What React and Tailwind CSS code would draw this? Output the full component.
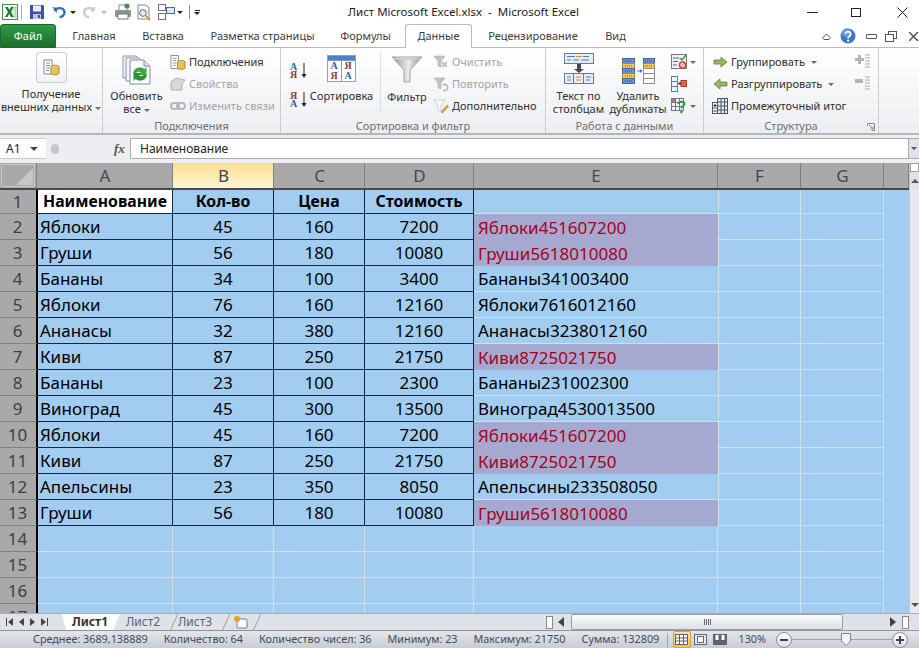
import React from 'react';

const ui = { fontFamily: '"Noto Sans", sans-serif' };

const rows = [
  ['Яблоки', 45, 160, 7200],
  ['Груши', 56, 180, 10080],
  ['Бананы', 34, 100, 3400],
  ['Яблоки', 76, 160, 12160],
  ['Ананасы', 32, 380, 12160],
  ['Киви', 87, 250, 21750],
  ['Бананы', 23, 100, 2300],
  ['Виноград', 45, 300, 13500],
  ['Яблоки', 45, 160, 7200],
  ['Киви', 87, 250, 21750],
  ['Апельсины', 23, 350, 8050],
  ['Груши', 56, 180, 10080],
];

const joined = rows.map((r) => r.join(''));

function Caret({ className = '' }) {
  return <span className={`inline-block w-0 h-0 border-x-[3px] border-x-transparent border-t-[3px] border-t-[#6a6a6a] ${className}`} />;
}

function ExcelLogo() {
  return (
    <svg width="16" height="16" viewBox="0 0 16 16">
      <rect x="0.500" y="0.500" width="15" height="15" fill="#fff" stroke="#3e8e4a" />
      <rect x="9" y="3" width="5" height="10" fill="#cfe8cf" stroke="#6aa86f" strokeWidth="0.500" />
      <path d="M3 3h3l1.400 3L9 3h2.400L8.800 8l2.800 5H8.800L7.200 9.800 5.600 13H3l3-5z" fill="#1e7a34" />
    </svg>
  );
}

function QuickBar() {
  return (
    <div className="flex items-center h-full">
      <div className="ml-[2px]"><ExcelLogo /></div>
      <div className="w-px h-[14px] bg-[#a9a9a9] ml-[3px]" />
      <svg className="ml-[7px]" width="16" height="16" viewBox="0 0 16 16">
        <path d="M1 1h13l1 1v13H1z" fill="#3e4fa8" />
        <rect x="4" y="1.500" width="8" height="6" fill="#e9edf7" />
        <rect x="4" y="10" width="8" height="5" fill="#b9c0d8" />
        <rect x="9" y="11" width="2" height="3" fill="#3e4fa8" />
      </svg>
      <svg className="ml-[7px]" width="15" height="14" viewBox="0 0 14 14" fill="none">
        <path d="M2 6c2-4 9-4 10 1 0 3-2 5-5 5" stroke="#2e6fc0" strokeWidth="2.400" />
        <path d="M0 2l5 1-1 5z" fill="#2e6fc0" />
      </svg>
      <Caret className="ml-[3px] !border-t-[#222]" />
      <svg className="ml-[6px]" width="14" height="14" viewBox="0 0 14 14" fill="none">
        <path d="M12 6C10 2 3 2 2 7c0 3 2 5 5 5" stroke="#c3cbd0" strokeWidth="2.400" />
        <path d="M14 2l-5 1 1 5z" fill="#c3cbd0" />
      </svg>
      <Caret className="ml-[5px] !border-t-[#b5b5b5]" />
      <svg className="ml-[7px]" width="18" height="18" viewBox="0 0 18 18">
        <rect x="5" y="2" width="8" height="6" fill="#fff" stroke="#8a8a8a" />
        <rect x="1" y="7" width="16" height="7" rx="1" fill="#8d9296" />
        <rect x="4" y="11" width="10" height="5" fill="#fff" stroke="#777" />
        <circle cx="13" cy="3" r="2.600" fill="#3d9a43" />
      </svg>
      <svg className="ml-[4px]" width="17" height="17" viewBox="0 0 17 17" fill="none">
        <path d="M2 1h8l3 3v11H2z" fill="#fff" stroke="#7c8690" />
        <circle cx="7" cy="9" r="3.400" fill="#dcebf7" stroke="#5a6b7d" />
        <path d="M10 12l4 4" stroke="#d99a2b" strokeWidth="2" />
      </svg>
      <svg className="ml-[5px]" width="17" height="16" viewBox="0 0 17 16" fill="none">
        <rect x="0.500" y="0.500" width="7" height="6" fill="#fff" stroke="#6a7480" />
        <rect x="8.500" y="3.500" width="8" height="6" fill="#dbe7f4" stroke="#3c6fa8" />
        <rect x="0.500" y="9.500" width="7" height="6" fill="#fff" stroke="#6a7480" />
      </svg>
      <Caret className="ml-[2px] !border-t-[#222]" />
      <div className="w-px h-[14px] bg-[#8f8f8f] ml-[6px]" />
      <div className="ml-[4px] flex flex-col items-center gap-[1px]">
        <span className="w-[5px] h-px bg-[#222]" />
        <Caret className="!border-t-[#222]" />
      </div>
    </div>
  );
}

function TitleBar() {
  return (
    <div className="h-[24px] bg-white flex items-center relative shrink-0">
      <QuickBar />
      <div className="absolute left-[348px] top-[3px] text-[11.500px] text-[#1a1a1a] whitespace-pre">Лист Microsoft Excel.xlsx  -  Microsoft Excel</div>
      <div className="ml-auto flex items-center h-full">
        <span className="w-[11px] h-px bg-[#222] mr-[33px]" />
        <span className="w-[10px] h-[9px] border border-[#222] mr-[36px]" />
        <svg className="mr-[11px]" width="11" height="11" viewBox="0 0 11 11" stroke="#222"><path d="M0.500 0.500l10 10M10.500 0.500l-10 10" /></svg>
      </div>
    </div>
  );
}

const tabs = [
  ['Главная', 'w-[76px]'],
  ['Вставка', 'w-[62px]'],
  ['Разметка страницы', 'w-[137px]'],
  ['Формулы', 'w-[74px] pr-[5px]'],
];

function TabBar() {
  return (
    <div className="h-[24px] bg-white flex items-end relative shrink-0 text-[11px] text-[#3c3c3c]">
      <div className="absolute left-0 right-0 bottom-0 h-px bg-[#b7bbbf]" />
      <div className="w-[56px] h-[24px] rounded-t-[3px] bg-gradient-to-b from-[#2f9a46] to-[#1d6e2e] border border-[#1c6a2c] text-white flex items-center justify-center relative">Файл</div>
      {tabs.map(([t, w]) => (
        <div key={t} className={`${w} h-[24px] flex items-center justify-center`}>{t}</div>
      ))}
      <div className="w-[67px] h-[24px] bg-white border border-b-0 border-[#b7bbbf] rounded-t-[3px] flex items-center justify-center relative z-10">Данные</div>
      <div className="w-[122px] h-[24px] flex items-center justify-center">Рецензирование</div>
      <div className="w-[43px] h-[24px] flex items-center justify-center">Вид</div>
      <div className="ml-auto flex items-center h-[24px]">
        <svg className="mr-[9px]" width="9" height="7" viewBox="0 0 9 7" fill="none" stroke="#555"><path d="M0.500 5l4-4 4 4-1.500 1.500h-5z" /></svg>
        <svg className="mr-[10px]" width="16" height="16" viewBox="0 0 17 17"><circle cx="8.500" cy="8.500" r="8" fill="#3f78c8" /><circle cx="7" cy="5" r="5" fill="#7fa9e2" opacity=".6" /><path d="M5.800 6.500c0-3.400 5.600-3.400 5.600 0 0 2.200-2.800 2.200-2.800 4.500" fill="none" stroke="#fff" strokeWidth="1.900" /><circle cx="8.600" cy="13.500" r="1.200" fill="#fff" /></svg>
        <span className="w-[11px] h-[5px] border border-[#555] rounded-[1px] mr-[8px]" />
        <svg className="mr-[12px]" width="12" height="11" viewBox="0 0 12 11" fill="#fff" stroke="#555"><rect x="3.500" y="0.500" width="8" height="7" /><rect x="0.500" y="3.500" width="8" height="7" /></svg>
        <svg width="10" height="9" viewBox="0 0 10 9" stroke="#555" strokeWidth="1.500"><path d="M0 0l9 9M9 0l-9 9" /></svg>
      </div>
    </div>
  );
}

function Group({ label, width, children, launcher }) {
  return (
    <div className={`${width} h-full flex flex-col border-r border-[#c9ccd0] relative shrink-0`}>
      <div className="flex-1 flex min-h-0">{children}</div>
      <div className="h-[14px] text-center text-[11px] leading-[14px] text-[#6f6f6f]">{label}</div>
      {launcher && (
        <svg className="absolute right-[3px] bottom-[2px]" width="8" height="8" viewBox="0 0 8 8" fill="none" stroke="#8a8a8a"><path d="M0.500 3V0.500H7.500V7.500H5M2 2l4 4M6 3.500V6H3.500" /></svg>
      )}
    </div>
  );
}

function SmallRow({ icon, label, disabled, caret, className = '' }) {
  return (
    <div className={`h-[22px] flex items-center whitespace-nowrap ${disabled ? 'text-[#a5a5a5]' : 'text-[#2f2f2f]'} ${className}`}>
      <span className="w-[16px] h-[16px] flex items-center justify-center mr-[3px]">{icon}</span>
      {label}
      {caret && <Caret className="ml-[6px]" />}
    </div>
  );
}

function ExternalIcon() {
  return (
    <svg width="17" height="17" viewBox="0 0 17 17">
      <path d="M1 1h8v14H1z" fill="#fff" stroke="#7d8794" />
      <path d="M3 4h4M3 6.500h4M3 9h4M3 11.500h3" stroke="#7b8ea6" />
      <ellipse cx="12" cy="8" rx="4" ry="1.800" fill="#f1cf72" stroke="#a88a3a" />
      <path d="M8 8v6c0 2.400 8 2.400 8 0V8" fill="#e9bf56" stroke="#a88a3a" />
    </svg>
  );
}

function RefreshIcon() {
  return (
    <svg width="30" height="30" viewBox="0 0 30 30">
      <path d="M1 1h13l3 3v19H1z" fill="#eef2f7" stroke="#8c97a6" />
      <path d="M4 3h13l3 3v20H4z" fill="#f4f6fa" stroke="#8c97a6" />
      <path d="M8 5h14l6 6v18H8z" fill="#fff" stroke="#7f8a99" />
      <path d="M22 5v6h6" fill="#dfe6ee" stroke="#7f8a99" />
      <path d="M11 18a7 7 0 0 1 11.500-4l2-2v8h-8l2.500-2.500a3.400 3.400 0 0 0-5 1z" fill="#3ea843" />
      <path d="M25 20a7 7 0 0 1-11.500 4l-2 2v-8h8L17 20.500a3.400 3.400 0 0 0 5-1z" fill="#2f9137" />
    </svg>
  );
}

function SortAZ({ reverse }) {
  const top = reverse ? '#8f3a3a' : '#2f5da0';
  const bot = reverse ? '#2f5da0' : '#8f3a3a';
  return (
    <div className="flex items-center gap-[4px] w-[18px]">
      <div className="flex flex-col text-[10px] leading-[8px] font-bold" style={{ fontFamily: '"Liberation Serif", serif' }}>
        <span style={{ color: top }}>{reverse ? 'Я' : 'А'}</span>
        <span style={{ color: bot }}>{reverse ? 'А' : 'Я'}</span>
      </div>
      <svg width="6" height="16" viewBox="0 0 6 16"><path d="M3 0v12" stroke="#222" /><path d="M0.500 11h5L3 15z" fill="#222" /></svg>
    </div>
  );
}

function SortBigIcon() {
  const cell = 'flex-1 flex flex-col items-center justify-center text-[10px] leading-[10px] font-bold bg-white';
  return (
    <div className="w-[29px] h-[27px] border border-[#94a3b5] bg-[#7c98ba] flex flex-col" style={{ fontFamily: '"Liberation Serif", serif' }}>
      <div className="h-[4px] bg-[#4f81c7]" />
      <div className="flex-1 flex gap-px pt-px">
        <div className={cell}><span className="text-[#2f5da0]">А</span><span className="text-[#8f3a3a]">Я</span></div>
        <div className={cell}><span className="text-[#8f3a3a]">Я</span><span className="text-[#2f5da0]">А</span></div>
      </div>
    </div>
  );
}

function FunnelIcon() {
  return (
    <svg width="32" height="27" viewBox="0 0 32 27">
      <defs>
        <linearGradient id="fn" x1="0" x2="1" y1="0" y2="0">
          <stop offset="0" stopColor="#8e8e8e" /><stop offset=".55" stopColor="#ececec" /><stop offset="1" stopColor="#8a8a8a" />
        </linearGradient>
      </defs>
      <path d="M1 1h30L19 14v12h-6V14z" fill="url(#fn)" stroke="#a3a3a3" />
      <ellipse cx="16" cy="2.500" rx="14" ry="1.500" fill="#d0d0d0" />
    </svg>
  );
}

function SmallFunnel({ color = '#c3c3c3', extra }) {
  return (
    <svg width="16" height="16" viewBox="0 0 16 16">
      <path d="M1 2h11L8 7v6l-3-1V7z" fill={color} stroke="#a0a0a0" strokeWidth="0.500" />
      {extra}
    </svg>
  );
}

function TextColsIcon() {
  return (
    <svg width="32" height="31" viewBox="0 0 32 31" fill="none">
      <rect x="1.500" y="0.500" width="29" height="10" fill="#e6edf6" stroke="#6d7a8a" />
      <path d="M4 3.500h8M20 3.500h6M4 7h4M10 7h6M18 7h8" stroke="#4f7ec0" />
      <path d="M13 3.500h6" stroke="#e88a1a" />
      <path d="M14 11h4v5h3l-5 4-5-4h3z" fill="#4a4a4a" />
      <rect x="1.500" y="20.500" width="29" height="10" fill="#e6edf6" stroke="#6d7a8a" />
      <path d="M10.500 20.500v10M20.500 20.500v10" stroke="#6d7a8a" />
      <path d="M4 24h4M23 24h5M4 27h4M23 27h4" stroke="#4f7ec0" />
      <path d="M13 24h5M13 27h5" stroke="#e88a1a" />
    </svg>
  );
}

function DedupIcon() {
  const blue = '#6d93cf';
  const gold = '#f4c652';
  const Hatch = ({ x, y, c }) => <path d={`M${x} ${y}h8`} stroke={c} strokeDasharray="1 1" />;
  return (
    <svg width="33" height="26" viewBox="0 0 33 26">
      <rect x="0.500" y="0.500" width="12" height="5" fill={blue} stroke="#44659a" />
      <rect x="0.500" y="5.500" width="12" height="5" fill={gold} stroke="#a88a3a" />
      <rect x="0.500" y="10.500" width="12" height="5" fill={blue} stroke="#44659a" />
      <rect x="0.500" y="15.500" width="12" height="5" fill={gold} stroke="#a88a3a" />
      <rect x="0.500" y="20.500" width="12" height="5" fill={blue} stroke="#44659a" />
      <Hatch x={3} y={3} c="#27406d" /><Hatch x={3} y={8} c="#7c5a12" /><Hatch x={3} y={13} c="#27406d" /><Hatch x={3} y={18} c="#7c5a12" /><Hatch x={3} y={23} c="#27406d" />
      <path d="M15 13h3" stroke="#3a6fc0" /><path d="M18 11l2.500 2L18 15z" fill="#3a6fc0" />
      <rect x="21.500" y="0.500" width="11" height="5" fill={blue} stroke="#44659a" />
      <rect x="21.500" y="5.500" width="11" height="5" fill={gold} stroke="#a88a3a" />
      <Hatch x={23} y={3} c="#27406d" /><Hatch x={23} y={8} c="#7c5a12" />
      <rect x="21.500" y="10.500" width="11" height="5" fill="#fff" stroke="#8a8f96" />
      <rect x="21.500" y="15.500" width="11" height="5" fill="#fff" stroke="#8a8f96" />
      <rect x="21.500" y="20.500" width="11" height="5" fill="#fff" stroke="#8a8f96" />
    </svg>
  );
}

function ValidationIcon() {
  return (
    <svg width="16" height="16" viewBox="0 0 16 16" fill="none">
      <rect x="0.500" y="0.500" width="15" height="14" fill="#eef3f9" stroke="#6d7a8a" />
      <path d="M2 4h6M2 7.500h5M2 11h4" stroke="#5a6b7d" />
      <path d="M9 4l2 2 4-5" stroke="#3d9a43" strokeWidth="1.500" />
      <circle cx="11.500" cy="11" r="3" fill="#fff" stroke="#d8402a" strokeWidth="1.500" />
      <path d="M9.500 13l4-4" stroke="#d8402a" />
    </svg>
  );
}

function ConsolidateIcon() {
  return (
    <svg width="16" height="16" viewBox="0 0 16 16" fill="none">
      <rect x="0.500" y="0.500" width="6" height="15" fill="#eef3f9" stroke="#5f7c9e" />
      <path d="M0.500 5.500h6M0.500 10.500h6" stroke="#5f7c9e" />
      <rect x="10" y="4.500" width="5.500" height="6" fill="#e8604a" stroke="#b03a28" />
      <path d="M7 7.500h2.500" stroke="#333" /><path d="M8.500 5.500l2 2-2 2z" fill="#333" />
    </svg>
  );
}

function WhatIfIcon() {
  return (
    <svg width="16" height="16" viewBox="0 0 16 16">
      <rect x="0.500" y="0.500" width="12" height="12" fill="#eef3f9" stroke="#6d7a8a" />
      <path d="M0.500 4.500h12M0.500 8.500h12M4.500 0.500v12M8.500 0.500v12" stroke="#6d7a8a" />
      <rect x="1" y="1" width="3" height="3" fill="#e8604a" />
      <path d="M7.500 6c0-3 6-3 6 0 0 2.200-3 2-3 4.500" fill="none" stroke="#2f9a3e" strokeWidth="2" />
      <circle cx="10.500" cy="14" r="1.400" fill="#2f9a3e" />
    </svg>
  );
}

function ArrowIcon({ left }) {
  return (
    <svg width="15" height="12" viewBox="0 0 15 12">
      <path d={left ? 'M1 6l6-5v3h7v4H7v3z' : 'M14 6L8 1v3H1v4h7v3z'} fill="#93b95c" stroke="#5f7f34" strokeWidth="0.800" />
    </svg>
  );
}

function SubtotalIcon() {
  return (
    <svg width="16" height="16" viewBox="0 0 16 16" fill="none" stroke="#4c5866">
      <rect x="0.500" y="4.500" width="5" height="11" fill="#fff" />
      <rect x="5.500" y="0.500" width="10" height="15" fill="#e3ebf5" />
      <path d="M0.500 10h5M5.500 4h10M5.500 8h10M5.500 12h10M9 0.500v15M12.500 0.500v15" />
      <path d="M1.500 7.500h3M3 6v3M1.500 13h3" stroke="#222" />
    </svg>
  );
}

function OutlineIcon({ minus }) {
  return (
    <svg width="16" height="16" viewBox="0 0 16 16" fill="none">
      {minus ? <rect x="0" y="3" width="8" height="4" fill="#b5b5b5" /> : <path d="M3 1h3v3h3v3H6v3H3V7H0V4h3z" fill="#b5b5b5" />}
      <path d="M10 1h5M10 4h5M10 7h5M10 10h5M10 13h5" stroke="#a8a8a8" />
    </svg>
  );
}

function Ribbon() {
  return (
    <div className="h-[87px] shrink-0 flex bg-gradient-to-b from-white to-[#eceef1] border-b-2 border-[#b3b6ba] text-[11px] text-[#2f2f2f]">
      <Group label="" width="w-[103px]">
        <div className="w-full flex flex-col items-center pt-[4px]">
          <div className="w-[31px] h-[31px] rounded-[3px] border border-[#c9ccd0] bg-gradient-to-b from-white to-[#f1f2f4] flex items-center justify-center"><ExternalIcon /></div>
          <div className="text-center leading-[13px] mt-[4px] whitespace-nowrap">Получение<br />внешних данных<Caret className="ml-[3px] align-middle" /></div>
        </div>
      </Group>
      <Group label="Подключения" width="w-[178px]">
        <div className="w-[67px] flex flex-col items-center pt-[7px]">
          <RefreshIcon />
          <div className="text-center leading-[13px] mt-[4px]">Обновить<br />все<Caret className="ml-[3px] align-middle" /></div>
        </div>
        <div className="flex flex-col pt-[3px]">
          <SmallRow label="Подключения" icon={<ExternalIcon />} />
          <SmallRow label="Свойства" disabled icon={<svg width="16" height="16" viewBox="0 0 16 16"><path d="M1 6l5-4 9 2-3 4v6H1z" fill="#d6d8da" stroke="#b0b2b5" /></svg>} />
          <SmallRow label="Изменить связи" disabled icon={<svg width="16" height="10" viewBox="0 0 16 10" fill="none" stroke="#b5b7ba" strokeWidth="2"><rect x="1" y="2" width="8" height="6" rx="3" /><rect x="7" y="2" width="8" height="6" rx="3" /></svg>} />
        </div>
      </Group>
      <Group label="Сортировка и фильтр" width="w-[265px]">
        <div className="w-[24px] ml-[9px] flex flex-col pt-[15px] gap-[13px]">
          <SortAZ />
          <SortAZ reverse />
        </div>
        <div className="w-[70px] flex flex-col items-center pt-[7px] -ml-[8px]">
          <SortBigIcon />
          <div className="mt-[7px] ml-px leading-[13px]">Сортировка</div>
        </div>
        <div className="w-px h-[62px] bg-[#dcdfe3] mt-[4px] ml-[4px]" />
        <div className="w-[46px] flex flex-col items-center pt-[8px] ml-[3px]">
          <FunnelIcon />
          <div className="mt-[7px] leading-[13px]">Фильтр</div>
        </div>
        <div className="flex flex-col pt-[3px] ml-[3px]">
          <SmallRow label="Очистить" disabled icon={<SmallFunnel extra={<path d="M9 8l5 5M14 8l-5 5" stroke="#b5b5b5" strokeWidth="1.500" />} />} />
          <SmallRow label="Повторить" disabled icon={<SmallFunnel extra={<path d="M10 9a3 3 0 1 1 0 5" stroke="#b5b5b5" strokeWidth="1.500" fill="none" />} />} />
          <SmallRow label="Дополнительно" icon={<SmallFunnel color="#fff" extra={<path d="M8 14l6-7 1.500 1.500L9.500 15z" fill="#e2b13c" stroke="#8a6a1e" strokeWidth="0.500" />} />} />
        </div>
      </Group>
      <Group label="Работа с данными" width="w-[158px]">
        <div className="w-[59px] ml-[3px] flex flex-col items-center pt-[5px]">
          <TextColsIcon />
          <div className="text-center leading-[13px] mt-[5px] whitespace-nowrap">Текст по<br />столбцам</div>
        </div>
        <div className="w-[60px] flex flex-col items-center pt-[10px]">
          <DedupIcon />
          <div className="text-center leading-[13px] mt-[5px] whitespace-nowrap">Удалить<br />дубликаты</div>
        </div>
        <div className="flex flex-col pt-[3px] ml-[3px]">
          <div className="h-[22px] flex items-center gap-[3px]"><ValidationIcon /><Caret /></div>
          <div className="h-[22px] flex items-center"><ConsolidateIcon /></div>
          <div className="h-[22px] flex items-center gap-[3px]"><WhatIfIcon /><Caret /></div>
        </div>
      </Group>
      <Group label="Структура" width="w-[175px]" launcher>
        <div className="flex flex-col pt-[3px] ml-[9px]">
          <SmallRow label="Группировать" caret icon={<ArrowIcon />} className="-ml-px" />
          <SmallRow label="Разгруппировать" caret icon={<ArrowIcon left />} className="-ml-px" />
          <SmallRow label="Промежуточный итог" icon={<SubtotalIcon />} className="-ml-px" />
        </div>
        <div className="flex flex-col pt-[3px] ml-auto mr-[7px]">
          <div className="h-[22px] flex items-center"><OutlineIcon /></div>
          <div className="h-[22px] flex items-center"><OutlineIcon minus /></div>
        </div>
      </Group>
    </div>
  );
}

function FormulaBar() {
  return (
    <div className="h-[28px] shrink-0 bg-[#eceef1] flex items-start pt-[3px] text-[12px] text-[#222]">
      <div className="w-[46px] h-[21px] bg-white flex items-center pl-[6px] gap-[9px] border-y border-[#c9ccd0]">A1<Caret className="!border-t-[#444] border-x-[4px] border-t-[4px]" /></div>
      <div className="w-[84px] h-[21px] flex items-center relative">
        <span className="ml-[5px] w-[8px] h-[10px] rounded-full bg-[#c4c7cb]" />
        <span className="absolute left-[68px] top-[1px] text-[13px] font-bold italic text-[#555]" style={{ fontFamily: '"Liberation Serif", serif' }}>fx</span>
      </div>
      <div className="flex-1 h-[21px] bg-white border border-[#a9adb2] flex items-center pl-[9px]">Наименование</div>
      <div className="w-[10px] h-[21px] bg-[#dfe2e6] border-y border-[#a9adb2] flex items-center justify-center"><Caret className="!border-t-[#555]" /></div>
    </div>
  );
}

const cols = [
  ['A', 'w-[136px]'],
  ['B', 'w-[101px]'],
  ['C', 'w-[91px]'],
  ['D', 'w-[109px]'],
  ['E', 'w-[244px]'],
  ['F', 'w-[83px]'],
  ['G', 'w-[83px]'],
  ['', 'w-[25px]'],
];

function HeaderRow() {
  return (
    <div className="flex h-[27px] shrink-0 border-b-2 border-[#4a4a4a] bg-[#a9a9a9] text-[17px] text-[#3b4a55]">
      <div className="w-[37px] h-full border-r border-[#808080] relative bg-[#a9a9a9] shrink-0">
        <div className="absolute inset-[1px] border border-[#c9c9c9]" />
        <div className="absolute right-[3px] bottom-[3px] w-0 h-0 border-l-[17px] border-l-transparent border-b-[17px] border-b-[#c6c6c6]" />
      </div>
      {cols.map(([c, w]) => (
        <div key={c || 'h'} className={`${w} h-full flex items-center justify-center pl-px border-r border-[#808080] shrink-0 ${c === 'B' ? 'bg-gradient-to-b from-[#fbe18d] to-[#fff5d0]' : ''}`}>{c}</div>
      ))}
    </div>
  );
}

function RowHead({ n }) {
  return <div className="w-[38px] h-full shrink-0 flex items-center justify-center pr-px bg-[#a9a9a9] border-r-2 border-r-black border-b border-b-[#808080] text-[17px] text-[#404040]">{n}</div>;
}

const dark = 'border-r border-b border-[#0b2a4a]';
const light = 'border-r border-b border-[#d6dde3]';

function HeadCell({ w, children, active }) {
  return <div className={`${w} h-full shrink-0 flex items-center justify-center font-bold text-[15.800px] ${dark} ${active ? 'bg-white' : ''}`}>{children}</div>;
}

function Cell({ w, children, left }) {
  return <div className={`${w} h-full shrink-0 flex items-center pt-px ${left ? 'pl-[2px]' : 'justify-center'} ${dark}`}>{children}</div>;
}

function Sheet() {
  return (
    <div className="flex-1 min-w-0 flex flex-col overflow-hidden">
      <HeaderRow />
      <div className="flex-1 min-h-0 overflow-hidden bg-[#a3cdf0] text-[17px] text-black">
        <div className="flex h-[24px]">
          <RowHead n={1} />
          <HeadCell w="w-[135px]" active>Наименование</HeadCell>
          <HeadCell w="w-[101px]">Кол-во</HeadCell>
          <HeadCell w="w-[91px]">Цена</HeadCell>
          <HeadCell w="w-[109px]">Стоимость</HeadCell>
          <div className="w-[244px] h-full shrink-0 border-b border-[#d6dde3]" />
          <div className={`w-[83px] h-full shrink-0 ${light} border-l`} />
          <div className={`w-[83px] h-full shrink-0 ${light}`} />
        </div>
        {rows.map((r, i) => {
          const dup = joined.filter((j) => j === joined[i]).length > 1;
          return (
            <div key={i} className="flex h-[26px]">
              <RowHead n={i + 2} />
              <Cell w="w-[135px]" left>{r[0]}</Cell>
              <Cell w="w-[101px]">{r[1]}</Cell>
              <Cell w="w-[91px]">{r[2]}</Cell>
              <Cell w="w-[109px]">{r[3]}</Cell>
              <div className={`w-[244px] h-full shrink-0 flex items-center pt-px pl-[4px] ${dup ? 'bg-[#a5a9d0] text-[#a80018]' : 'border-b border-[#d6dde3]'}`}>{joined[i]}</div>
              <div className={`w-[83px] h-full shrink-0 ${light} border-l`} />
              <div className={`w-[83px] h-full shrink-0 ${light}`} />
            </div>
          );
        })}
        {[14, 15, 16, 17].map((n) => (
          <div key={n} className="flex h-[26px]">
            <RowHead n={n} />
            <div className={`w-[135px] h-full shrink-0 ${light}`} />
            {cols.slice(1, 7).map(([c, w]) => <div key={c} className={`${w} h-full shrink-0 ${light}`} />)}
          </div>
        ))}
      </div>
    </div>
  );
}

function VScroll() {
  return (
    <div className="w-[10px] shrink-0 bg-[#e6e9ee] flex flex-col items-center border-l border-[#c4c7cc]">
      <div className="h-[9px] w-full border border-[#9aa0a6] bg-white" />
      <div className="h-[17px] w-full flex items-center justify-center bg-[#dfe2e7]"><span className="w-0 h-0 border-x-[4px] border-x-transparent border-b-[4px] border-b-[#555]" /></div>
      <div className="flex-1" />
      <div className="h-[17px] w-full flex items-center justify-center"><Caret className="!border-t-[#555] border-x-[4px] border-t-[4px]" /></div>
    </div>
  );
}

function Slash({ className = '' }) {
  return <svg className={`shrink-0 ${className}`} width="8" height="17" viewBox="0 0 8 17" stroke="#9aa0a8"><path d="M8 0L0 17" /></svg>;
}

function SheetBar() {
  return (
    <div className="h-[17px] shrink-0 bg-[#dfe2e7] border-t border-[#a9adb2] flex items-center">
      <div className="w-[62px] flex items-center gap-[6px] pl-[6px]">
        <svg width="7" height="8" viewBox="0 0 7 8" fill="#444"><path d="M0 0h1v8H0zM7 0v8L2 4z" /></svg>
        <svg width="5" height="8" viewBox="0 0 5 8" fill="#444"><path d="M5 0v8L0 4z" /></svg>
        <svg width="5" height="8" viewBox="0 0 5 8" fill="#444"><path d="M0 0v8l5-4z" /></svg>
        <svg width="7" height="8" viewBox="0 0 7 8" fill="#444"><path d="M6 0h1v8H6zM0 0v8l5-4z" /></svg>
      </div>
      <div className="flex h-full w-[483px] items-center text-[12px]">
        <div className="w-[58px] h-full bg-white font-bold text-[#333] flex items-center justify-center pr-[2px] [clip-path:polygon(0_0,100%_0,88%_100%,7%_100%)]">Лист1</div>
        <div className="w-[50px] h-full pr-[4px] flex items-center justify-center text-[#5a6472]">Лист2</div>
        <Slash />
        <div className="w-[44px] h-full pr-[10px] flex items-center justify-center text-[#5a6472]">Лист3</div>
        <Slash />
        <svg className="ml-[3px]" width="16" height="14" viewBox="0 0 16 14"><rect x="4" y="4" width="10" height="9" rx="1" fill="#fff" stroke="#6d7f95" /><circle cx="4" cy="4" r="3" fill="#e8a02a" /></svg>
        <Slash className="ml-[4px]" />
      </div>
      <div className="ml-px w-[7px] h-[13px] border border-[#888] bg-white mr-[5px]" />
      <span className="w-0 h-0 border-y-[5px] border-y-transparent border-r-[6px] border-r-[#444] mr-[7px]" />
      <div className="w-[272px] h-[16px] rounded-[2px] border border-[#9aa0a8] bg-gradient-to-b from-[#fbfbfc] to-[#dde0e5] flex items-center justify-center gap-px">
        <span className="w-px h-[6px] bg-[#666]" /><span className="w-px h-[6px] bg-[#666]" /><span className="w-px h-[6px] bg-[#666]" /><span className="w-px h-[6px] bg-[#666]" />
      </div>
      <span className="w-0 h-0 border-y-[5px] border-y-transparent border-l-[6px] border-l-[#444] ml-[47px] mr-[6px]" />
      <div className="w-[7px] h-[13px] border border-[#888] bg-white" />
    </div>
  );
}

function StatusBar() {
  const items = ['Среднее: 3689,138889', 'Количество: 64', 'Количество чисел: 36', 'Минимум: 23', 'Максимум: 21750', 'Сумма: 132809'];
  return (
    <div className="h-[18px] shrink-0 bg-gradient-to-b from-[#e3e6ea] to-[#c9cdd3] border-t border-[#8f9399] flex items-center text-[10.800px] text-[#3f4b5c]">
      <div className="ml-[33px] flex gap-[16px]">{items.map((t) => <span key={t} className="whitespace-nowrap">{t}</span>)}</div>
      <div className="ml-auto flex items-center h-full mr-[11px]">
        <span className="w-px h-[14px] bg-[#a0a4aa] mr-[5px]" />
        <div className="w-[18px] h-[17px] bg-gradient-to-b from-[#fde79a] to-[#f8c14a] border border-[#d6a53a] rounded-[2px] flex items-center justify-center">
          <svg width="13" height="11" viewBox="0 0 13 11" fill="#fff" stroke="#5a6472"><rect x="0.500" y="0.500" width="12" height="10" /><path d="M0.500 4h12M0.500 7h12M4.500 0.500v10M8.500 0.500v10" fill="none" /></svg>
        </div>
        <svg className="ml-[3px]" width="13" height="11" viewBox="0 0 13 11" fill="#e7eaee" stroke="#5a6472"><rect x="0.500" y="0.500" width="12" height="10" /><rect x="3.500" y="2.500" width="6" height="6" fill="#fff" /></svg>
        <svg className="ml-[6px]" width="14" height="11" viewBox="0 0 14 11" fill="#5a6472" stroke="#5a6472"><rect x="0.500" y="0.500" width="13" height="10" /><rect x="2" y="0.500" width="4" height="6" fill="#fff" /><rect x="8" y="0.500" width="4" height="6" fill="#fff" /></svg>
        <span className="ml-[12px] mr-[10px]">130%</span>
        <span className="w-[16px] h-[16px] rounded-full border border-[#8a9098] bg-gradient-to-b from-white to-[#d9dce1] flex items-center justify-center"><span className="w-[8px] h-[2px] bg-[#444]" /></span>
        <div className="w-[100px] h-px bg-[#9aa0a8] relative">
          <svg className="absolute left-[49px] -top-[6px]" width="10" height="13" viewBox="0 0 10 13" fill="#f5f6f8" stroke="#7d848c"><path d="M0.500 0.500h9V8L5 12.500 0.500 8z" /></svg>
        </div>
        <span className="w-[16px] h-[16px] rounded-full border border-[#8a9098] bg-gradient-to-b from-white to-[#d9dce1] flex items-center justify-center relative"><span className="w-[8px] h-[2px] bg-[#444]" /><span className="absolute w-[2px] h-[8px] bg-[#444]" /></span>
      </div>
    </div>
  );
}

export default function App() {
  return (
    <div className="w-[919px] h-[648px] overflow-hidden flex flex-col bg-white" style={ui}>
      <TitleBar />
      <TabBar />
      <Ribbon />
      <FormulaBar />
      <div className="flex-1 min-h-0 flex">
        <Sheet />
        <VScroll />
      </div>
      <SheetBar />
      <StatusBar />
    </div>
  );
}
